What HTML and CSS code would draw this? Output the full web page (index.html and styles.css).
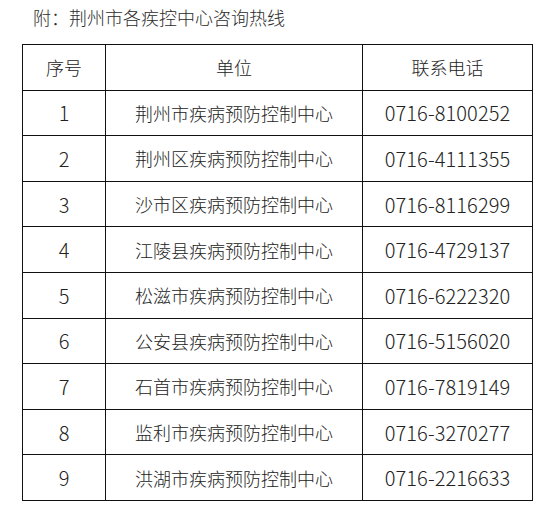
FILE: index.html
```html
<!DOCTYPE html>
<html lang="zh">
<head>
<meta charset="utf-8">
<link rel="stylesheet" href="styles.css">
</head>
<body>
<div class="page">
  <h1 class="title">附：荆州市各疾控中心咨询热线</h1>
  <table class="hotline">
    <colgroup>
      <col class="c-no">
      <col class="c-unit">
      <col class="c-tel">
    </colgroup>
    <thead>
      <tr><th>序号</th><th>单位</th><th>联系电话</th></tr>
    </thead>
    <tbody>
      <tr><td>1</td><td>荆州市疾病预防控制中心</td><td>0716-8100252</td></tr>
      <tr><td>2</td><td>荆州区疾病预防控制中心</td><td>0716-4111355</td></tr>
      <tr><td>3</td><td>沙市区疾病预防控制中心</td><td>0716-8116299</td></tr>
      <tr><td>4</td><td>江陵县疾病预防控制中心</td><td>0716-4729137</td></tr>
      <tr><td>5</td><td>松滋市疾病预防控制中心</td><td>0716-6222320</td></tr>
      <tr><td>6</td><td>公安县疾病预防控制中心</td><td>0716-5156020</td></tr>
      <tr><td>7</td><td>石首市疾病预防控制中心</td><td>0716-7819149</td></tr>
      <tr><td>8</td><td>监利市疾病预防控制中心</td><td>0716-3270277</td></tr>
      <tr><td>9</td><td>洪湖市疾病预防控制中心</td><td>0716-2216633</td></tr>
    </tbody>
  </table>
</div>
</body>
</html>
```
FILE: styles.css
```css
html, body {
  margin: 0;
  padding: 0;
  background: #ffffff;
}
.page {
  width: 543px;
  height: 507px;
  overflow: hidden;
  font-family: "Noto Sans CJK SC", "Noto Sans", sans-serif;
  font-weight: 300;
  color: #222;
}
.title {
  margin: 0;
  padding: 4px 0 0 33px;
  height: 44px;
  box-sizing: border-box;
  font-size: 18px;
  font-weight: 300;
  line-height: 26px;
  color: #2b2b2b;
}
.hotline {
  margin-left: 22px;
  border-collapse: collapse;
  table-layout: fixed;
  width: 510px;
}
.c-no { width: 83px; }
.c-unit { width: 257px; }
.c-tel { width: 170px; }
.hotline th,
.hotline td {
  border: 1.5px solid #111;
  height: 45.6px;
  padding: 0;
  box-sizing: border-box;
  text-align: center;
  vertical-align: middle;
  font-size: 18px;
  font-weight: 300;
  color: #222;
}
.hotline td:nth-child(1) {
  font-size: 20px;
}
.hotline td:nth-child(3) {
  font-size: 20px;
  letter-spacing: 0.1px;
}
```
